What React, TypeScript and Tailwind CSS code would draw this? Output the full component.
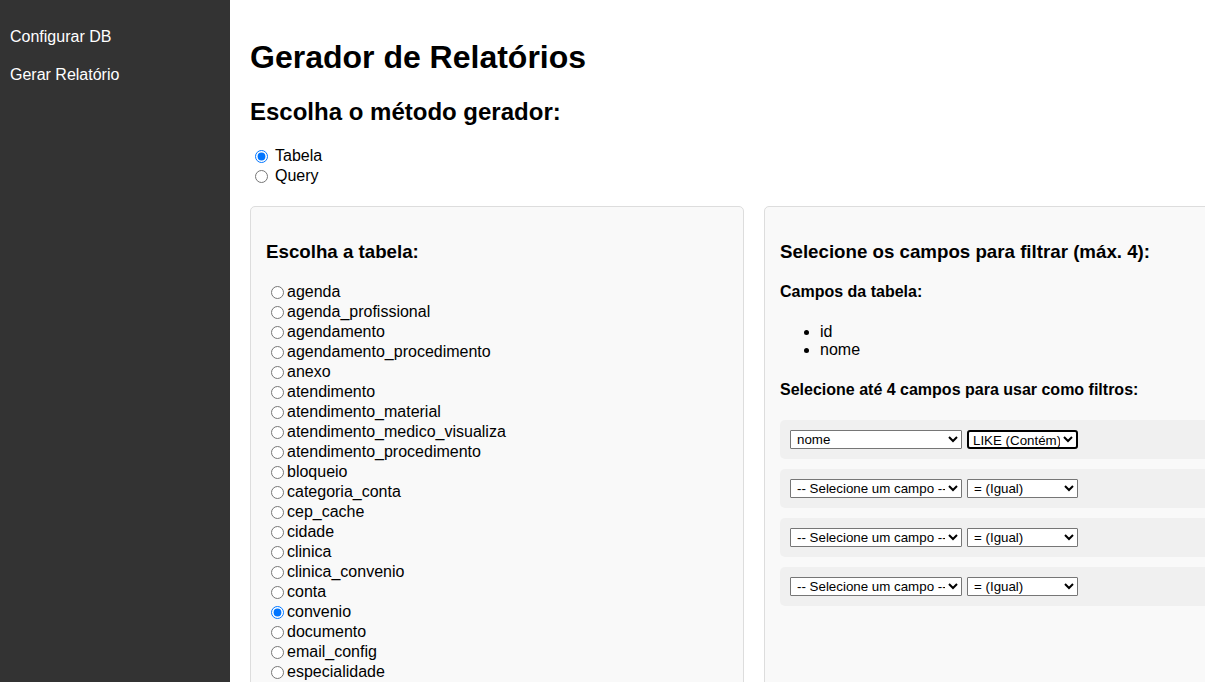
import React from "react";

const tables = [
  "agenda",
  "agenda_profissional",
  "agendamento",
  "agendamento_procedimento",
  "anexo",
  "atendimento",
  "atendimento_material",
  "atendimento_medico_visualiza",
  "atendimento_procedimento",
  "bloqueio",
  "categoria_conta",
  "cep_cache",
  "cidade",
  "clinica",
  "clinica_convenio",
  "conta",
  "convenio",
  "documento",
  "email_config",
  "especialidade",
  "estado",
  "evolucao",
  "exame",
];

function SelectBox({
  value,
  options,
  width,
  focused,
}: {
  value: string;
  options: string[];
  width: string;
  focused?: boolean;
}) {
  return (
    <select
      defaultValue={value}
      className={
        focused
          ? "h-[19px] w-[111px] text-[13.33px] leading-none bg-white text-black border-2 border-black rounded-[3px] pl-0 outline-none"
          : width === "w1"
          ? "h-[19px] w-[172px] text-[13.33px] leading-none bg-white text-black border border-[#767676] rounded-[1px] pl-[2px] outline-none"
          : "h-[19px] w-[111px] text-[13.33px] leading-none bg-white text-black border border-[#767676] rounded-[1px] pl-[2px] outline-none"
      }
    >
      {options.map((o) => (
        <option key={o}>{o}</option>
      ))}
    </select>
  );
}

export default function App() {
  const fieldOpts = ["-- Selecione um campo --", "id", "nome"];
  const opOpts = ["= (Igual)", "LIKE (Contém)", "> (Maior)", "< (Menor)"];
  return (
    <div
      className="flex min-h-screen w-full overflow-x-hidden bg-white text-black text-[16px]"
      style={{ fontFamily: '"Liberation Sans", Arial, sans-serif' }}
    >
      <aside className="w-[230px] shrink-0 bg-[#333333] pt-[18px] min-h-screen">
        <a className="block px-[10px] py-[10px] leading-[18px] text-white" href="#">
          Configurar DB
        </a>
        <a className="block px-[10px] py-[10px] leading-[18px] text-white" href="#">
          Gerar Relatório
        </a>
      </aside>
      <main className="flex-1 p-[20px] min-w-0">
        <h1 className="text-[32px] font-bold mt-[19px] mb-[22px] leading-[37px]">
          Gerador de Relatórios
        </h1>
        <h2 className="text-[24px] font-bold mb-[20px] leading-[28px]">
          Escolha o método gerador:
        </h2>
        <div>
          <label className="flex items-center h-[20px]">
            <input
              type="radio"
              name="metodo"
              defaultChecked
              className="m-[3px_3px_0_5px] w-[13px] h-[13px] self-start mt-[4px]"
            />
            <span className="ml-[4px]">Tabela</span>
          </label>
          <label className="flex items-center h-[20px]">
            <input
              type="radio"
              name="metodo"
              className="m-[3px_3px_0_5px] w-[13px] h-[13px] self-start mt-[4px]"
            />
            <span className="ml-[4px]">Query</span>
          </label>
        </div>
        <div className="flex gap-[20px] mt-[20px] w-[1008px]">
          <section className="w-[494px] shrink-0 bg-[#f9f9f9] border border-[#dddddd] rounded-[5px] px-[15px] pt-[15px] pb-[15px]">
            <h3 className="text-[18.72px] font-bold mt-[19px] mb-[19px] leading-[22px]">
              Escolha a tabela:
            </h3>
            <div>
              {tables.map((t) => (
                <label key={t} className="flex items-center h-[20px]">
                  <input
                    type="radio"
                    name="tabela"
                    defaultChecked={t === "convenio"}
                    className="m-[3px_3px_0_5px] w-[13px] h-[13px] self-start mt-[4px]"
                  />
                  <span>{t}</span>
                </label>
              ))}
            </div>
          </section>
          <section className="w-[494px] shrink-0 bg-[#f9f9f9] border border-[#dddddd] rounded-[5px] px-[15px] pt-[15px] pb-[15px]">
            <h3 className="text-[18.72px] font-bold mt-[19px] mb-[20px] leading-[22px]">
              Selecione os campos para filtrar (máx. 4):
            </h3>
            <h4 className="text-[16px] font-bold leading-[18px]">Campos da tabela:</h4>
            <ul className="list-disc pl-[40px] mt-[22px] mb-[22px] leading-[18px]">
              <li>id</li>
              <li>nome</li>
            </ul>
            <h4 className="text-[16px] font-bold leading-[18px] mb-[21px]">
              Selecione até 4 campos para usar como filtros:
            </h4>
            <div className="flex flex-col gap-[10px]">
              <div className="bg-[#f0f0f0] rounded-[5px] p-[10px] flex items-center gap-[5px]">
                <SelectBox value="nome" options={fieldOpts} width="w1" />
                <SelectBox value="LIKE (Contém)" options={opOpts} width="w2" focused />
              </div>
              {[0, 1, 2].map((i) => (
                <div
                  key={i}
                  className="bg-[#f0f0f0] rounded-[5px] p-[10px] flex items-center gap-[5px]"
                >
                  <SelectBox value="-- Selecione um campo --" options={fieldOpts} width="w1" />
                  <SelectBox value="= (Igual)" options={opOpts} width="w2" />
                </div>
              ))}
            </div>
          </section>
        </div>
      </main>
    </div>
  );
}
